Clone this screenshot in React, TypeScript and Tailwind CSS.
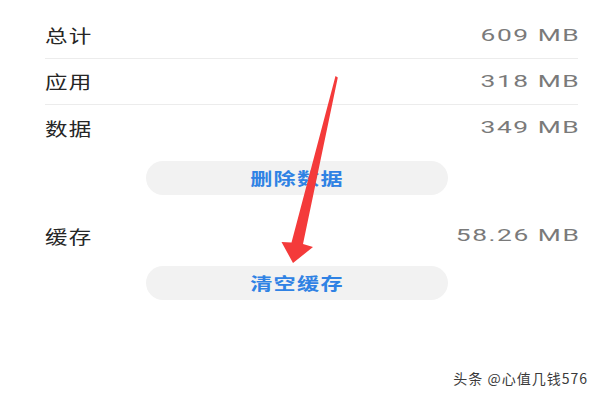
import React from "react"

const rows = [
  { label: "总计", value: "609 MB" },
  { label: "应用", value: "318 MB" },
  { label: "数据", value: "349 MB" },
]

const cjk = { fontFamily: '"Noto Sans CJK SC", "Noto Sans", sans-serif' }

function Row({ label, value, border }: { label: string; value: string; border?: boolean }) {
  return (
    <div
      className={
        "flex h-[46px] items-center justify-between " +
        (border ? "border-b border-[#ececec]" : "")
      }
    >
      <span className="origin-left scale-x-[1.25] text-[18px] tracking-[1px] text-[#262626]">
        {label}
      </span>
      <span
        className="-mr-[2px] origin-right scale-x-[1.55] text-[17px] tracking-[1px] text-[#7a7a7a]"
        style={{ fontFamily: "Roboto, sans-serif" }}
      >
        {value}
      </span>
    </div>
  )
}

function Pill({ text }: { text: string }) {
  return (
    <div className="ml-[101px] flex h-[34px] w-[302px] items-center justify-center rounded-full bg-[#f2f2f2]">
      <span className="scale-x-[1.3] text-[17px] font-bold tracking-[1px] text-[#2f82e4]">{text}</span>
    </div>
  )
}

export default function App() {
  return (
    <div className="relative h-[400px] w-[600px] overflow-hidden bg-white" style={cjk}>
      <div className="flex flex-col pl-[45px] pr-[22px] pt-[13px]">
        {rows.map((r, i) => (
          <Row key={r.label} label={r.label} value={r.value} border={i < 2} />
        ))}
        <div className="mt-[10px]">
          <Pill text="删除数据" />
        </div>
        <div className="mt-[18px]">
          <Row label="缓存" value="58.26 MB" />
        </div>
        <div className="mt-[7px]">
          <Pill text="清空缓存" />
        </div>
      </div>

      <svg className="absolute left-0 top-0" width="600" height="400" viewBox="0 0 600 400">
        <polygon
          points="335.5,76 337.8,77.5 303,244 313,247 293,263 281.5,242 291.5,242.5"
          fill="#f43a3a"
        />
      </svg>

      <div className="absolute bottom-[11px] right-[12px] text-[14px] tracking-[1px] text-[#3a3a3a]">
        头条 @心值几钱576
      </div>
    </div>
  )
}
